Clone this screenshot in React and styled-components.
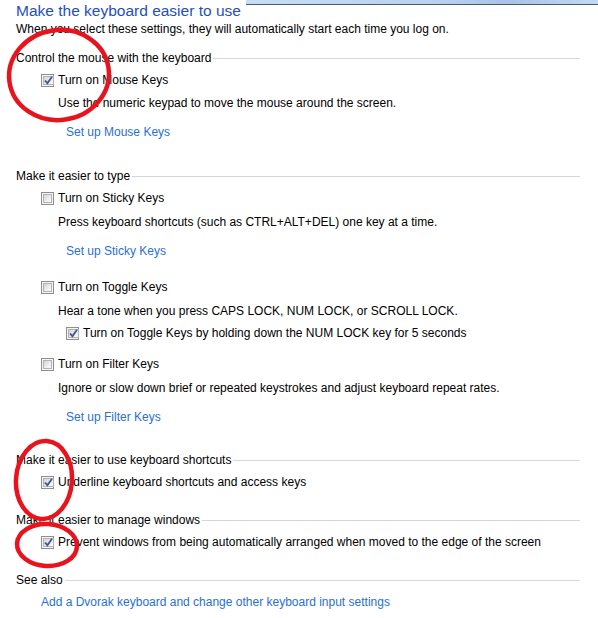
import React from 'react'
import styled, { createGlobalStyle } from 'styled-components'

const Global = createGlobalStyle`
  html, body { margin: 0; padding: 0; background: #ffffff; }
  body { font-family: 'Liberation Sans', Arial, sans-serif; }
`

const Page = styled.div`
  position: relative;
  width: 598px;
  height: 618px;
  overflow: hidden;
  background: #fff;
  color: #000;
  font-size: 12px;
`

const Header = styled.div`
  display: flex;
  align-items: flex-start;
  padding-left: 16px;
`

const Title = styled.div`
  font-size: 15.5px;
  line-height: 22px;
  color: #1f4fbf;
  white-space: nowrap;
  padding-right: 5px;
`

const TopBar = styled.div`
  flex: 1;
  height: 4px;
  background: linear-gradient(90deg, #c8dcf4 0%, #b9d1ef 55%, #a9c3e6 75%, #c4d9f3 100%);
  border-bottom: 1px solid #4b5a6d;
`

const Intro = styled.div`
  padding-left: 16px;
  line-height: 14px;
`

const Group = styled.div`
  margin-top: ${p => p.$mt}px;
  padding-left: 16px;
  width: 564px;
`

const Heading = styled.div`
  display: flex;
  align-items: center;
  line-height: 14px;
  white-space: nowrap;
  &::after {
    content: '';
    flex: 1;
    height: 1px;
    background: #d6d6d6;
    margin-left: 2px;
  }
`

const Row = styled.label`
  display: flex;
  align-items: center;
  line-height: 14px;
  margin-top: ${p => p.$mt ?? 8}px;
  padding-left: ${p => p.$indent ?? 25}px;
  white-space: nowrap;
`

const Box = styled.span`
  box-sizing: border-box;
  width: 13px;
  height: 13px;
  margin-right: 4px;
  border: 1px solid #8f8f8f;
  background: #f4f4f4;
  padding: 1px;
  display: flex;
  flex-shrink: 0;
  span {
    flex: 1;
    border: 1px solid #b3b3b3;
    background: linear-gradient(135deg, #d4d4d4 0%, #eeeeee 60%, #fafafa 100%);
    display: flex;
    align-items: center;
    justify-content: center;
  }
`

const Desc = styled.div`
  line-height: 14px;
  margin-top: ${p => p.$mt ?? 10}px;
  padding-left: 42px;
  white-space: nowrap;
`

const Link = styled.a`
  display: block;
  line-height: 14px;
  margin-top: ${p => p.$mt ?? 15}px;
  padding-left: ${p => p.$indent ?? 50}px;
  color: #2a6fd2;
  text-decoration: none;
  white-space: nowrap;
  cursor: pointer;
`

const Marks = styled.svg`
  position: absolute;
  left: 0;
  top: 0;
  pointer-events: none;
`

function Check({ on }) {
  return (
    <Box>
      <span>
        {on && (
          <svg width="9" height="9" viewBox="0 0 9 9">
            <path d="M1 4.5 L3.4 7.2 L8 0.8" fill="none" stroke="#3e5694" strokeWidth="1.8" />
          </svg>
        )}
      </span>
    </Box>
  )
}

function Option({ on, mt, indent, children }) {
  return (
    <Row $mt={mt} $indent={indent}>
      <Check on={on} />
      {children}
    </Row>
  )
}

export default function App() {
  return (
    <Page>
      <Global />
      <Header>
        <Title>Make the keyboard easier to use</Title>
        <TopBar />
      </Header>
      <Intro>When you select these settings, they will automatically start each time you log on.</Intro>

      <Group $mt={15}>
        <Heading>Control the mouse with the keyboard</Heading>
        <Option on>Turn on Mouse Keys</Option>
        <Desc $mt={9}>Use the numeric keypad to move the mouse around the screen.</Desc>
        <Link>Set up Mouse Keys</Link>
      </Group>

      <Group $mt={30}>
        <Heading>Make it easier to type</Heading>
        <Option>Turn on Sticky Keys</Option>
        <Desc>Press keyboard shortcuts (such as CTRL+ALT+DEL) one key at a time.</Desc>
        <Link>Set up Sticky Keys</Link>

        <Option mt={22}>Turn on Toggle Keys</Option>
        <Desc>Hear a tone when you press CAPS LOCK, NUM LOCK, or SCROLL LOCK.</Desc>
        <Option on indent={50}>Turn on Toggle Keys by holding down the NUM LOCK key for 5 seconds</Option>

        <Option mt={17}>Turn on Filter Keys</Option>
        <Desc>Ignore or slow down brief or repeated keystrokes and adjust keyboard repeat rates.</Desc>
        <Link>Set up Filter Keys</Link>
      </Group>

      <Group $mt={29}>
        <Heading>Make it easier to use keyboard shortcuts</Heading>
        <Option on>Underline keyboard shortcuts and access keys</Option>
      </Group>

      <Group $mt={24}>
        <Heading>Make it easier to manage windows</Heading>
        <Option on>Prevent windows from being automatically arranged when moved to the edge of the screen</Option>
      </Group>

      <Group $mt={24}>
        <Heading>See also</Heading>
        <Link $mt={8} $indent={25}>Add a Dvorak keyboard and change other keyboard input settings</Link>
      </Group>

      <Marks width="598" height="618" viewBox="0 0 598 618">
        <g fill="none" stroke="#e8131c" strokeWidth="4.5">
          <ellipse cx="59" cy="75" rx="50" ry="45" transform="rotate(-8 59 75)" />
          <ellipse cx="44" cy="480" rx="28" ry="39" transform="rotate(4 44 480)" />
          <ellipse cx="47" cy="545" rx="30" ry="21" transform="rotate(3 47 545)" />
        </g>
      </Marks>
    </Page>
  )
}
